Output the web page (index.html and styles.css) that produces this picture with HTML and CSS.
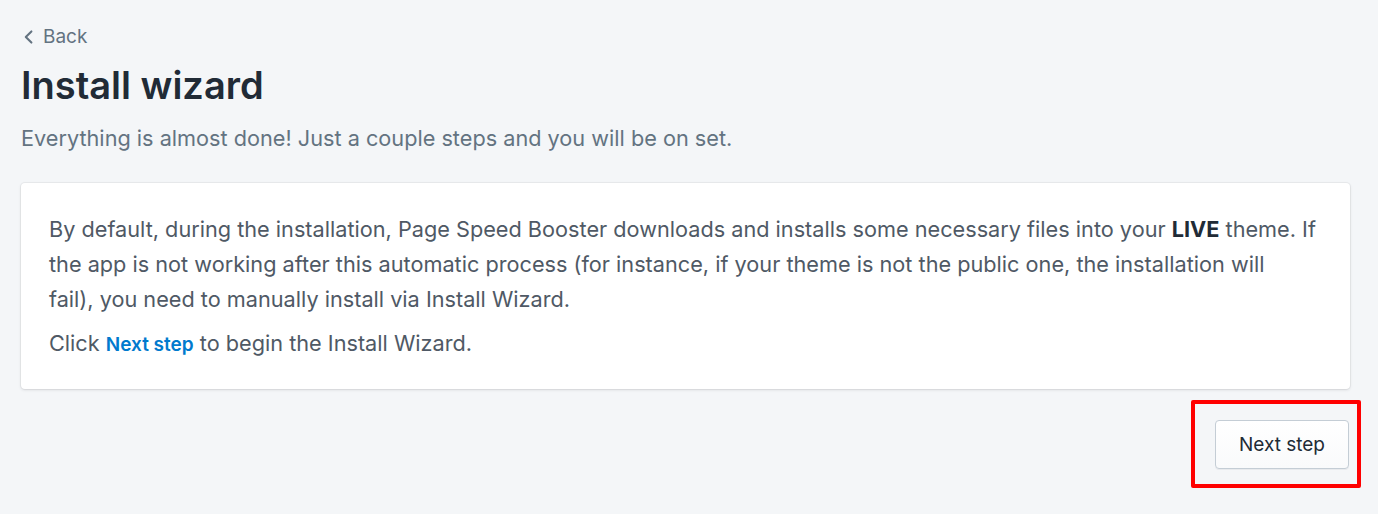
FILE: index.html
```html
<!DOCTYPE html>
<html lang="en">
<head>
<meta charset="utf-8">
<title>Install wizard</title>
<link rel="stylesheet" href="styles.css">
</head>
<body>
<div class="page">
  <a class="back" href="#">
    <svg class="back-icon" viewBox="0 0 20 20" width="16" height="16" aria-hidden="true"><path d="M13 3 6 10l7 7" fill="none" stroke="currentColor" stroke-width="2.6" stroke-linecap="round" stroke-linejoin="round"/></svg>
    <span>Back</span>
  </a>
  <h1 class="title">Install wizard</h1>
  <p class="subtitle">Everything is almost done! Just a couple steps and you will be on set.</p>
  <div class="card">
    <p class="para">By default, during the installation, Page Speed Booster downloads and installs some necessary files into your <strong>LIVE</strong> theme. If the app is not working after this automatic process (for instance, if your theme is not the public one, the installation will<br>fail), you need to manually install via Install Wizard.</p>
    <p class="para second">Click <a class="link" href="#">Next step</a> to begin the Install Wizard.</p>
  </div>
  <div class="actions">
    <div class="highlight">
      <button class="btn" type="button">Next step</button>
    </div>
  </div>
</div>
</body>
</html>
```
FILE: styles.css
```css
html, body {
  margin: 0;
  padding: 0;
  background: #f4f6f8;
}
body {
  font-family: Inter, "Noto Sans", "Liberation Sans", sans-serif;
  color: #454f5b;
}
.page {
  padding: 25px 28px 0 21px;
}
.back {
  display: flex;
  align-items: center;
  gap: 6px;
  height: 24px;
  font-size: 19px;
  line-height: 24px;
  color: #637381;
  text-decoration: none;
}
.back-icon {
  color: #637381;
}
.title {
  margin: 12px 0 0;
  font-size: 38px;
  line-height: 48px;
  font-weight: 600;
  color: #212b36;
}
.subtitle {
  margin: 14px 0 0;
  font-size: 21.7px;
  line-height: 30px;
  color: #637381;
}
.card {
  margin-top: 30px;
  background: #fff;
  border-radius: 4px;
  box-shadow: 0 0 0 1px rgba(63,63,68,0.05), 0 1px 3px 0 rgba(63,63,68,0.15);
  padding: 29px 28px 27px 28px;
}
.para {
  margin: 0;
  font-size: 21.7px;
  line-height: 35px;
  color: #4f5965;
}
.para.second {
  margin-top: 9px;
}
.para strong {
  font-weight: 700;
  color: #212b36;
}
.link {
  color: #007ace;
  font-weight: 600;
  text-decoration: none;
  font-size: 19px;
}
.actions {
  display: flex;
  justify-content: flex-end;
  margin-top: 11px;
  margin-right: -11px;
}
.highlight {
  border: 4px solid #ff0000;
  border-radius: 2px;
  padding: 16px 8px 15px 20px;
}
.btn {
  display: block;
  width: 134px;
  height: 49px;
  background: linear-gradient(180deg, #fff, #f9fafb);
  border: 1px solid #c4cdd5;
  border-radius: 4px;
  box-shadow: 0 1px 0 0 rgba(22,29,37,0.05);
  font-family: inherit;
  font-size: 19px;
  color: #212b36;
  cursor: pointer;
}
```
